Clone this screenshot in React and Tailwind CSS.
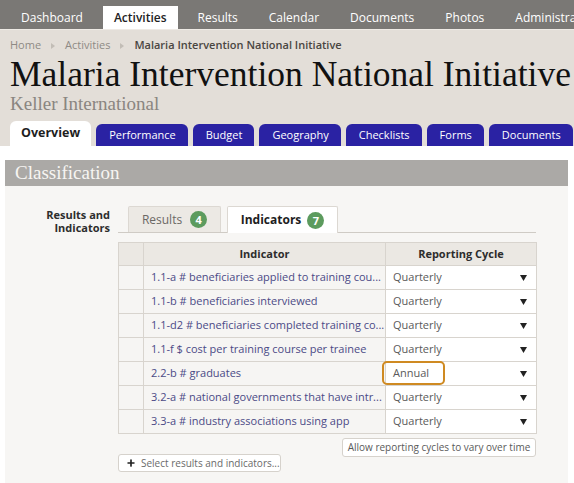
import { Plus } from 'lucide-react';

const topNav = ['Dashboard', 'Activities', 'Results', 'Calendar', 'Documents', 'Photos', 'Administration'];
const pageTabs = ['Performance', 'Budget', 'Geography', 'Checklists', 'Forms', 'Documents', 'Reports'];

const indicators = [
    { label: '1.1-a # beneficiaries applied to training cou...', cycle: 'Quarterly' },
    { label: '1.1-b # beneficiaries interviewed', cycle: 'Quarterly' },
    { label: '1.1-d2 # beneficiaries completed training co...', cycle: 'Quarterly' },
    { label: '1.1-f $ cost per training course per trainee', cycle: 'Quarterly' },
    { label: '2.2-b # graduates', cycle: 'Annual', highlight: true },
    { label: '3.2-a # national governments that have intr...', cycle: 'Quarterly' },
    { label: '3.3-a # industry associations using app', cycle: 'Quarterly' },
];

const serif = "font-['Liberation_Serif','Times_New_Roman',serif]";

function Crumb() {
    return (
        <svg width="4" height="6" viewBox="0 0 4 6" className="mx-[10px]">
            <polygon points="0,0 4,3 0,6" fill="#c2bdb6" />
        </svg>
    );
}

function Caret() {
    return (
        <svg width="7" height="6" viewBox="0 0 7 6">
            <polygon points="0,0 7,0 3.5,6" fill="#222" />
        </svg>
    );
}

function Badge({ n }) {
    return (
        <span className="inline-flex items-center justify-center w-[17px] h-[17px] rounded-full bg-[#5c9b5e] text-white text-[11px] font-bold leading-none">
            {n}
        </span>
    );
}

export default function App() {
    return (
        <div className="min-h-[483px] flex flex-col bg-white font-['Open_Sans',sans-serif] overflow-hidden">
            {/* Top nav */}
            <div className="h-[30px] bg-[#7a7875] border-b border-[#eeeae5] flex items-end gap-[9px] pl-[10px] whitespace-nowrap overflow-hidden">
                {topNav.map((item) => (
                    <div
                        key={item}
                        className={`h-[23px] flex items-center px-[11px] text-[12px] ${item === 'Activities'
                            ? 'bg-white text-[#222] font-semibold'
                            : 'text-white'
                            }`}
                    >
                        {item}
                    </div>
                ))}
            </div>

            {/* Header */}
            <div className="bg-[#e3ded8] pl-[10px]">
                <div className="pt-[8px] flex items-center h-[23px] text-[11px] whitespace-nowrap">
                    <span className="text-[#8e8a85]">Home</span>
                    <Crumb />
                    <span className="text-[#8e8a85]">Activities</span>
                    <Crumb />
                    <span className="text-[#4a4642] font-semibold">Malaria Intervention National Initiative</span>
                </div>
                <h1 className={`${serif} text-[35.5px] leading-[35px] text-[#111] whitespace-nowrap mt-[4px]`}>
                    Malaria Intervention National Initiative
                </h1>
                <p className={`${serif} text-[19px] leading-[23px] text-[#8a8580] whitespace-nowrap`}>
                    Keller International
                </p>
                <div className="flex items-end gap-[5px] h-[31px] whitespace-nowrap">
                    <div className="h-[25px] px-[11px] flex items-center bg-white rounded-t-[6px] text-[12.5px] font-bold text-[#1e1e1e]">
                        Overview
                    </div>
                    {pageTabs.map((t) => (
                        <div
                            key={t}
                            className="h-[22px] pl-[13px] pr-[12px] flex items-center bg-[#2a22a3] rounded-t-[6px] text-[11px] text-white"
                        >
                            {t}
                        </div>
                    ))}
                </div>
            </div>

            {/* Panel */}
            <div className="flex-1 flex flex-col pt-[14px] pl-[5px] pr-[6px]">
                <div className={`${serif} h-[26px] bg-[#aba9a6] text-[#f7f5f2] text-[19px] flex items-center pl-[10px]`}>
                    Classification
                </div>
                <div className="flex-1 bg-[#f7f6f4] pt-[21px] flex">
                    <div className="w-[105px] shrink-0 text-right text-[11px] leading-[13px] font-bold text-[#2d2d2d] pt-[1px]">
                        Results and
                        <br />
                        Indicators
                    </div>
                    <div className="ml-[8px] w-[418px]">
                        {/* Sub tabs */}
                        <div className="flex items-end h-[26px] border-b border-[#cfcbc5]">
                            <div className="ml-[10px] w-[93px] h-[26px] flex items-center justify-center gap-[8px] bg-[#ece9e4] border border-b-0 border-[#dcd8d2] rounded-t-[2px] text-[12px] text-[#6b6864]">
                                Results <Badge n={4} />
                            </div>
                            <div className="ml-[6px] w-[111px] h-[27px] -mb-px flex items-center justify-center gap-[6px] bg-white border border-b-0 border-[#dcd8d2] rounded-t-[2px] text-[12px] font-bold text-[#1e1e1e]">
                                Indicators <Badge n={7} />
                            </div>
                        </div>

                        {/* Table */}
                        <table className="mt-[9px] w-[418px] border-collapse table-fixed text-[11px]">
                            <colgroup>
                                <col className="w-[25px]" />
                                <col className="w-[242px]" />
                                <col className="w-[151px]" />
                            </colgroup>
                            <thead>
                                <tr className="h-[23px] bg-[#ebe8e3]">
                                    <th className="border border-[#d8d4ce]" />
                                    <th className="border border-[#d8d4ce] font-bold text-[#2d2d2d]">Indicator</th>
                                    <th className="border border-[#d8d4ce] font-bold text-[#2d2d2d]">Reporting Cycle</th>
                                </tr>
                            </thead>
                            <tbody>
                                {indicators.map((row) => (
                                    <tr key={row.label} className="h-[24px]">
                                        <td className="border border-[#d8d4ce] bg-[#f6f5f3]" />
                                        <td className="border border-[#d8d4ce] bg-[#f6f5f3] px-[7px] text-[#4b4a86] whitespace-nowrap overflow-hidden">
                                            {row.label}
                                        </td>
                                        <td className="border border-[#d8d4ce] bg-white p-0">
                                            <div className="relative h-[23px] flex items-center justify-between pl-[7px] pr-[9px] text-[#5a5a5a]">
                                                {row.highlight && (
                                                    <div className="absolute -left-[4px] -top-[1px] w-[63px] h-[24px] border-2 border-[#cf8a22] rounded-[5px]" />
                                                )}
                                                <span>{row.cycle}</span>
                                                <Caret />
                                            </div>
                                        </td>
                                    </tr>
                                ))}
                            </tbody>
                        </table>

                        {/* Buttons */}
                        <div className="flex items-start justify-between">
                            <button className="mt-[20px] h-[18px] w-[163px] flex items-center gap-[5px] pl-[7px] bg-white border border-[#d6d2cc] rounded-[3px] text-[10px] text-[#6a6a6a]">
                                <Plus className="w-[10px] h-[10px] text-[#222]" strokeWidth={4} />
                                Select results and indicators...
                            </button>
                            <button className="mt-[4px] h-[19px] w-[194px] flex items-center justify-center bg-white border border-[#d6d2cc] rounded-[3px] text-[10px] text-[#5a5a5a]">
                                Allow reporting cycles to vary over time
                            </button>
                        </div>
                    </div>
                </div>
            </div>
        </div>
    );
}
